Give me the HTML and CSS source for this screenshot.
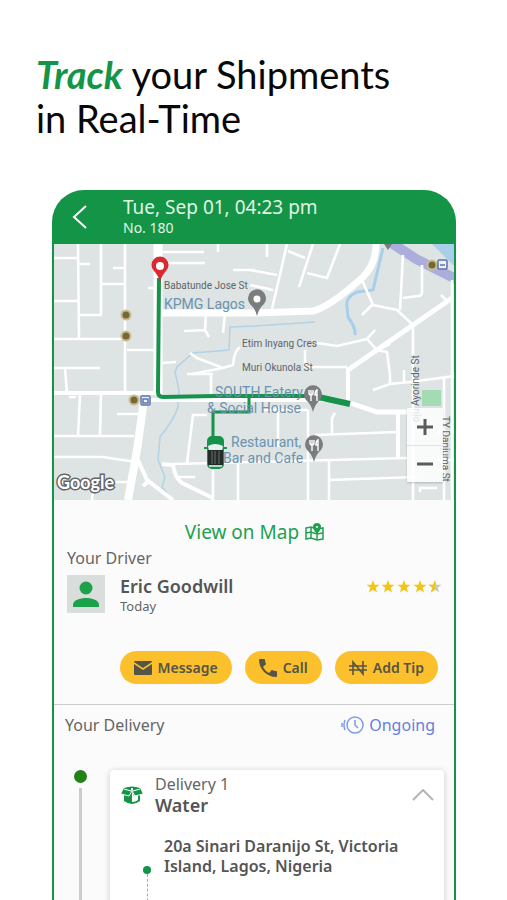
FILE: index.html
```html
<!DOCTYPE html>
<html lang="en">
<head>
    <meta charset="UTF-8">
    <meta name="viewport" content="width=device-width, initial-scale=1">
    <title>Track your Shipments</title>
    <link rel="stylesheet" href="styles.css">
</head>
<body>
    <h1 class="headline"><em>Track</em> your Shipments<br>in Real-Time</h1>

    <main class="phone">
        <header class="top-bar">
            <button type="button" class="back" aria-label="Back">
                <svg width="16" height="26" viewBox="0 0 16 26"><path d="M14 2 2 13l12 11" fill="none" stroke="#fff" stroke-width="2"/></svg>
            </button>
            <div>
                <div class="date">Tue, Sep 01, 04:23 pm</div>
                <div class="number">No. 180</div>
            </div>
        </header>

        <section class="map">
            <svg class="map-canvas" viewBox="0 0 400 256" role="img" aria-label="Route map">
                <rect width="400" height="256" fill="#dee3e4"/>
                <!-- water -->
                <path d="M378 0h22v22z" fill="#a9cfe8"/>
                <g fill="none" stroke="#b3d2e5" stroke-width="1.5">
                    <path d="M261 78 201 82 176 83 175 106 139 109 123 123 121 128 125 146 124 163Q120 176 106 193L104 216 111 233 108 243 118 256"/>
                    <path d="M329 4 319 46 303 48Q291 54 293 62L294 73Q302 84 301 91" stroke="#a5cfea" stroke-width="3"/>
                </g>
                <path d="M336-2 362 15 402 35" fill="none" stroke="#abaedd" stroke-width="10"/>
                <rect x="368" y="146" width="19" height="16" fill="#a3dbb5"/>
                <!-- streets -->
                <g fill="none" stroke="#fff" stroke-width="2.6">
                    <path d="M24 0 25 95M47 0V71H25M71 0V149M0 14H24M24 20H36M0 57H25M47 40H71M59 24H71M0 95H71M73 106H104M0 124H46M94 44H104M11 124 13 149"/>
                    <path d="M108 8H150M108 19H151M179 26H201M164 0V8M152 70 151 86 130 87M151 86 155 93M171 70 169 89M108 119 122 118M136 109 143 114 169 124 179 121Q180 107 186 103M138 130 169 124"/>
                    <path d="M213 0V13M233 0 218 65M234 7 251 14M259 0 245 43M253 29 273 34 286 0M196 26 223 31M196 41 219 46"/>
                    <path d="M308 36 319 61 343 66 359 81V256M318 61 308 71M349 11 346 66M368 21V48Q368 52 364 52L349 54M387 51 394 58M398 36V256M321 86 313 95 323 106 333 108 336 131V140M313 95 283 102 263 99M251 106V123H293M323 106 336 100"/>
                    <path d="M0 192H80M0 213H49L82 218M26 150 24 192M47 150 46 192M63 170H89M15 153H22M3 238H76M133 219 139 171H153M133 130H159M157 129V150M121 233H141M119 220 201 218 353 214M184 219V256M159 226V256M40 237 38 256"/>
                    <path d="M319 146 336 140 356 138 401 132M350 126V138M254 166V256M261 191 343 188M278 190V174L281 169M275 216V256M275 236 363 233M224 163V203M210 166H254M390 133V256M366 248V244H383M383 188H400M383 216H400"/>
                </g>
                <g fill="none" stroke="#fff" stroke-width="4">
                    <path d="M0 149H104M96 156H270M84 216 93 236 119 256M108 220 119 221Q121 234 128 239L159 254M344 169V214M294 124V158M89 242 96 236"/>
                    <path d="M294 126 359 81 398 54M296 159 323 168H353" stroke-width="5"/>
                    <path d="M104 0V150" stroke-width="9"/>
                    <path d="M104 69H201L259 67Q276 63 309 33 322 20 322 0" stroke-width="7"/>
                    <path d="M90 156 83 206 74 256" stroke-width="8"/>
                </g>
                <!-- route -->
                <g fill="none" stroke="#16924a" stroke-width="4">
                    <path d="M105 34 104 148Q104 153 109 153L162 152H255"/>
                    <path d="M195 152V168H159V194" stroke-width="3"/>
                    <path d="M253 152 269 154 296 160" stroke-width="6"/>
                </g>
                <!-- stops -->
                <g fill="#766638" stroke="#c9bd8d" stroke-width="2">
                    <circle cx="72" cy="71" r="4.5"/>
                    <circle cx="72" cy="92" r="4.5"/>
                    <circle cx="80" cy="156" r="4.5"/>
                    <circle cx="378" cy="21" r="4.5"/>
                </g>
                <g fill="#eef1fa" stroke="#5c74ad" stroke-width="1.5">
                    <rect x="87" y="152" width="9" height="9" rx="1"/>
                    <path d="M89 159v-4h5v4z"/>
                    <rect x="384" y="16" width="9" height="9" rx="1"/>
                    <path d="M386 21h5"/>
                </g>
                <!-- street names -->
                <g class="street">
                    <text x="110" y="45">Babatunde Jose St</text>
                    <text x="188" y="103">Etim Inyang Cres</text>
                    <text x="188" y="127">Muri Okunola St</text>
                    <text transform="translate(365 178) rotate(-90)">oju Ayorinde St</text>
                    <text transform="translate(388 172) rotate(90)">TY Danjuma St</text>
                </g>
                <g class="place">
                    <text x="110" y="65">KPMG Lagos</text>
                    <text x="161" y="153">SOUTH Eatery</text>
                    <text x="153" y="169">&amp; Social House</text>
                    <text x="177" y="203">Restaurant,</text>
                    <text x="169" y="219">Bar and Cafe</text>
                </g>
                <text x="3" y="245" class="google">Google</text>
                <!-- pins -->
                <g fill="#7b7c7e">
                    <path d="M203 72Q201 64 196 60A9 9 0 1 1 210 60Q205 64 203 72z"/>
                    <path d="M259 168Q257 160 252 156A9 9 0 1 1 266 156Q261 160 259 168z"/>
                    <path d="M260 218Q258 210 253 206A9 9 0 1 1 267 206Q262 210 260 218z"/>
                    <path d="M330 0h8l-4 6z"/>
                </g>
                <circle cx="203" cy="55" r="3.5" fill="#fff"/>
                <g fill="none" stroke="#fff" stroke-width="1.4">
                    <path id="fork" d="M255 146v3q0 2 2 2t2-2v-3M257 146v11M263 157V146q-2 1-2 5h2"/>
                    <use href="#fork" x="1" y="50"/>
                </g>
                <path d="M106 38Q104 31 100 27A8.5 8.5 0 1 1 112 27Q108 31 106 38z" fill="#d92a30"/>
                <circle cx="106" cy="22" r="4" fill="#fff"/>
                <!-- car -->
                <rect x="153" y="192" width="17" height="33" rx="5" fill="#16924a"/>
                <path d="M154 202q7-4 15 0l-1 5h-13z" fill="#e5f1ec"/>
                <path d="M150 204h3M170 204h3" stroke="#16924a" stroke-width="2"/>
                <rect x="154" y="206" width="15" height="15" fill="#242c2b"/>
                <path d="M158 207v13M161 207v13M165 207v13" stroke="#69706f"/>
                <path d="M155 222h13" stroke="#e5f1ec" stroke-width="1.5"/>
            </svg>
            <div class="map-zoom">
                <button type="button" aria-label="Zoom in"><svg width="18" height="18" viewBox="0 0 18 18"><path d="M1 9h16M9 1v16" stroke="#5b5b5b" stroke-width="3"/></svg></button>
                <button type="button" aria-label="Zoom out"><svg width="18" height="18" viewBox="0 0 18 18"><path d="M1 9h16" stroke="#5b5b5b" stroke-width="3"/></svg></button>
            </div>
        </section>

        <section class="driver">
            <a href="#" class="view-map">View on Map
                <svg width="19" height="18" viewBox="0 0 19 18" fill="none" stroke="#22a052" stroke-width="1.5">
                    <path d="M1 5l5-1 6 2 6-1v11l-6 1-6-2-5 1zM6 4v11M12 6v11M1 10l5-1 6 2 6-1"/>
                    <path d="M12 11Q8 7 8 4a4 4 0 0 1 8 0Q16 7 12 11z" fill="#22a052" stroke="none"/>
                    <circle cx="12" cy="4" r="1" fill="#fff" stroke="none"/>
                </svg>
            </a>
            <h2 class="section-title">Your Driver</h2>
            <div class="driver-row">
                <svg class="avatar" width="38" height="38" viewBox="0 0 38 38">
                    <rect width="38" height="38" fill="#d9dddc"/>
                    <circle cx="19" cy="13" r="6.5" fill="#1ba24b"/>
                    <path d="M6 32v-2c0-5 7-7 13-7s13 2 13 7v2z" fill="#1ba24b"/>
                </svg>
                <div class="driver-info">
                    <div class="driver-name">Eric Goodwill</div>
                    <div class="driver-day">Today</div>
                </div>
                <svg class="rating" width="76" height="14" viewBox="0 0 76 14" role="img" aria-label="4.5 stars">
                    <defs><path id="star" d="M7 0l1.700 4.700 4.900.1-3.900 3 1.400 4.800L7 9.800l-4.100 2.800 1.400-4.800-3.900-3 4.900-.1z"/></defs>
                    <g fill="#f3c518">
                        <use href="#star"/>
                        <use href="#star" x="15"/>
                        <use href="#star" x="31"/>
                        <use href="#star" x="47"/>
                    </g>
                    <use href="#star" x="62" fill="#c9c9cb"/>
                    <path d="M69 0l-1.700 4.700-4.900.1 3.900 3-1.400 4.800L69 9.800z" fill="#f3c518"/>
                </svg>
            </div>
            <div class="actions">
                <button type="button">
                    <svg width="18" height="14" viewBox="0 0 18 14"><path d="M0 1q0-1 1-1h16q1 0 1 1L9 7zM0 3l9 6 9-6v10q0 1-1 1H1q-1 0-1-1z" fill="#555446"/></svg>
                    Message
                </button>
                <button type="button">
                    <svg width="18" height="18" viewBox="0 0 18 18"><path d="M1 0h4q1 0 1 1 0 2 1 4 0 1-1 1L4 8q2 4 6 6l2-2q0-1 1-1 2 1 4 1 1 0 1 1v4q0 1-1 1C8 18 0 10 0 1q0-1 1-1z" fill="#555446"/></svg>
                    Call
                </button>
                <button type="button">
                    <svg width="18" height="16" viewBox="0 0 18 16"><path d="M4 15V2l10 12V1M0 6h18M0 10h18" fill="none" stroke="#555446" stroke-width="1.6"/></svg>
                    Add Tip
                </button>
            </div>
        </section>

        <section class="delivery">
            <div class="delivery-head">
                <h2 class="section-title">Your Delivery</h2>
                <span class="status">
                    <svg width="23" height="18" viewBox="0 0 23 18" fill="none" stroke="#7f9be8" stroke-width="1.5">
                        <circle cx="14" cy="9" r="8"/>
                        <path d="M14 4v5l3 3M4 4q-2 5 0 10M1 7v4"/>
                    </svg>
                    Ongoing
                </span>
            </div>
            <div class="timeline">
                <div class="rail"></div>
                <article class="card">
                    <div class="card-head">
                        <svg width="24" height="18" viewBox="0 0 24 18">
                            <path d="M4 2q8-3 16 0l3 6-3 1v6q-4 3-8 3t-8-3V9L1 8z" fill="#149447"/>
                            <path d="M12 10v6q4 0 6-2V9l-4 1-2-4z" fill="#fff"/>
                            <path d="M4 3l7 2 1-3 1 3 7-2M1 8l8 2 3-5 3 5 8-2" fill="none" stroke="#fff"/>
                        </svg>
                        <div class="card-title">
                            <div class="delivery-label">Delivery 1</div>
                            <div class="delivery-item">Water</div>
                        </div>
                        <button type="button" class="collapse" aria-label="Collapse">
                            <svg width="22" height="12" viewBox="0 0 22 12"><path d="M1 11 11 1l10 10" fill="none" stroke="#b5b5b5" stroke-width="2"/></svg>
                        </button>
                    </div>
                    <div class="stop">
                        <div class="stop-rail"></div>
                        <address>20a Sinari Daranijo St, Victoria Island, Lagos, Nigeria</address>
                    </div>
                </article>
            </div>
        </section>
    </main>
</body>
</html>
```
FILE: styles.css
```css
* {
    box-sizing: border-box;
}
body {
    display: flex;
    flex-direction: column;
    height: 100vh;
    margin: 0;
    overflow: hidden;
    background-color: #fff;
    color: #666;
    font-family: "Noto Sans", sans-serif;
}
button {
    padding: 0;
    border: 0;
    background: none;
    font-family: inherit;
    cursor: pointer;
}
svg {
    display: block;
    flex-shrink: 0;
}
.headline {
    margin: 0;
    padding: 52px 36px 50px;
    color: #080808;
    font-family: Lato, sans-serif;
    font-size: 38px;
    font-weight: 400;
    line-height: 44px;
}
.headline em {
    color: #149447;
    font-weight: 700;
}
.phone {
    display: flex;
    flex: 1;
    flex-direction: column;
    min-height: 0;
    margin: 0 51px 0 52px;
    overflow: hidden;
    border: 2px solid #149447;
    border-bottom: 0;
    border-radius: 32px 32px 0 0;
    background-color: #149447;
}
.top-bar {
    display: flex;
    flex-shrink: 0;
    align-items: center;
    gap: 35px;
    height: 52px;
    padding: 0 18px 3px;
    color: #e0f5e4;
}
.date {
    font-size: 19px;
    line-height: 22px;
}
.number {
    font-size: 14px;
    line-height: 20px;
}
.map {
    position: relative;
    flex-shrink: 0;
}
.map-canvas {
    width: 100%;
    height: auto;
}
.street {
    fill: #5d6568;
    font-family: Roboto, sans-serif;
    font-size: 10px;
}
.place {
    fill: #6a93ad;
    font-family: Roboto, sans-serif;
    font-size: 14px;
}
.google {
    fill: #fff;
    stroke: #656565;
    stroke-width: 3px;
    paint-order: stroke;
    font-family: Lato, sans-serif;
    font-size: 18px;
    font-weight: 700;
}
.map-zoom {
    position: absolute;
    right: 11px;
    bottom: 18px;
    display: flex;
    flex-direction: column;
    width: 36px;
    background-color: rgba(255, 255, 255, 0.8);
    box-shadow: 0 1px 2px rgba(0, 0, 0, 0.2);
}
.map-zoom button {
    display: flex;
    align-items: center;
    justify-content: center;
    height: 37px;
}
.map-zoom button + button {
    border-top: 1px solid #e2e2e2;
}
.driver {
    padding: 18px 12px 20px 13px;
    border-bottom: 1px solid #ccc;
    background-color: #fbfbfb;
}
.view-map {
    display: flex;
    align-items: center;
    justify-content: center;
    gap: 6px;
    color: #22a052;
    font-size: 19px;
    line-height: 28px;
    text-decoration: none;
}
.section-title {
    margin: 0;
    font-size: 16px;
    font-weight: 400;
    line-height: 24px;
}
.driver-row {
    display: flex;
    gap: 15px;
    padding-top: 5px;
}
.driver-info {
    flex: 1;
}
.driver-name {
    color: #555;
    font-size: 18px;
    font-weight: 600;
    line-height: 22px;
}
.driver-day {
    font-size: 13px;
    line-height: 18px;
}
.rating {
    margin-top: 5px;
}
.actions {
    display: flex;
    justify-content: flex-end;
    gap: 13px;
    padding: 36px 4px 0 0;
}
.actions button {
    display: flex;
    align-items: center;
    gap: 6px;
    height: 33px;
    padding: 0 14px;
    border-radius: 17px;
    background-color: #fcc02c;
    color: #555446;
    font-size: 14px;
    font-weight: 600;
}
.delivery {
    display: flex;
    flex: 1;
    flex-direction: column;
    padding: 8px 10px 0 11px;
    background-color: #fbfbfb;
}
.delivery-head {
    display: flex;
    align-items: center;
    justify-content: space-between;
    padding-right: 9px;
}
.status {
    display: flex;
    align-items: center;
    gap: 5px;
    color: #6580dc;
    font-size: 16px;
    line-height: 24px;
}
.timeline {
    display: flex;
    flex: 1;
    gap: 23px;
    padding: 33px 0 0 9px;
}
.rail {
    display: flex;
    flex-direction: column;
    align-items: center;
    gap: 5px;
    width: 13px;
}
.rail::before {
    width: 13px;
    height: 13px;
    border-radius: 50%;
    background-color: #248018;
    content: "";
}
.rail::after {
    flex: 1;
    width: 3px;
    background-color: #ccc;
    content: "";
}
.card {
    flex: 1;
    padding: 4px 10px 0;
    border-radius: 4px 4px 0 0;
    background-color: #fff;
    box-shadow: 0 1px 6px rgba(0, 0, 0, 0.2);
}
.card-head {
    display: flex;
    align-items: center;
    gap: 11px;
}
.card-title {
    flex: 1;
}
.delivery-label {
    font-size: 16px;
    line-height: 21px;
}
.delivery-item {
    color: #555;
    font-size: 18px;
    font-weight: 600;
    line-height: 21px;
}
.stop {
    display: flex;
    gap: 13px;
    padding: 20px 0 0 23px;
}
.stop-rail {
    display: flex;
    flex-direction: column;
    align-items: center;
    width: 8px;
    height: 80px;
    padding-top: 30px;
}
.stop-rail::before {
    width: 8px;
    height: 8px;
    border-radius: 50%;
    background-color: #149447;
    content: "";
}
.stop-rail::after {
    flex: 1;
    border-left: 1px dashed #aaa;
    content: "";
}
address {
    flex: 1;
    color: #555;
    font-size: 16px;
    font-style: normal;
    font-weight: 600;
    line-height: 20px;
}
```
